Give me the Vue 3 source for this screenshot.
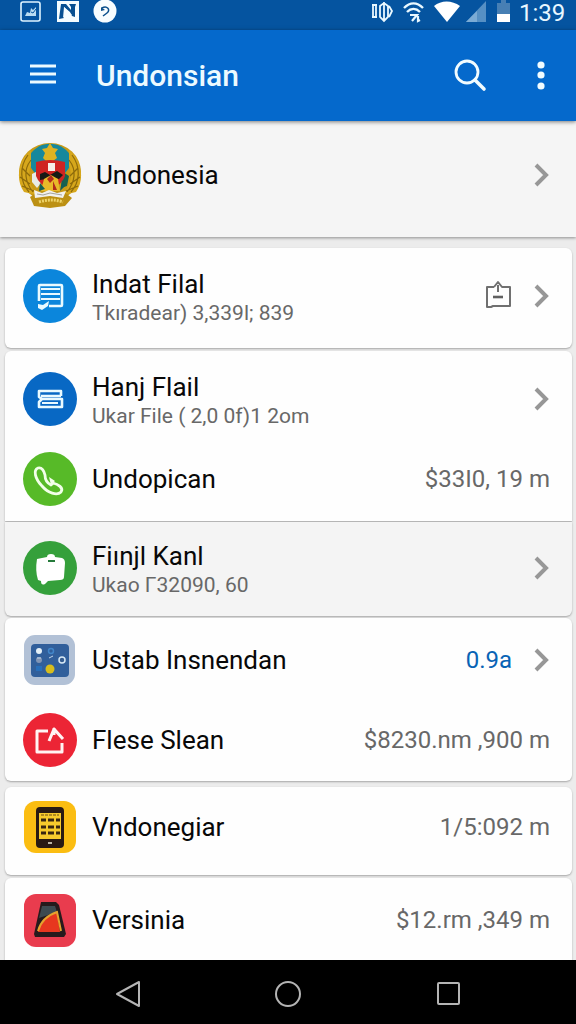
<template>
  <div class="screen">
    <div class="status">
      <svg class="status-left" width="100" height="30" viewBox="0 0 100 30" aria-hidden="true">
        <rect x="1" y="2" width="19" height="19" rx="2" fill="none" stroke="#dff4ff" stroke-width="1.6" />
        <path d="M5 16l2-4 3 1 1-5 2 2 3-3v9z" fill="#b9dcf2" />
        <path d="M6 9h3M11 12l2 1 3-4" stroke="#0554a0" stroke-width="1" fill="none" />
        <rect x="37" y="1" width="22" height="21" fill="#f4fcff" />
        <path d="M41 4h5l5 6V7l-2-3h7l-1 3v10l-3-1-2-4-6-5v11l-5 1z" fill="#064f91" />
        <path d="M44 7l8 8-4 1 1 3-2 1-2-4-2 2z" fill="#f4fcff" />
        <circle cx="85" cy="11" r="11.500" fill="#f8fdff" />
        <path d="M82 8c5-3 9 2 5 5l-4 3" stroke="#0a4f8c" stroke-width="1.500" fill="none" />
        <path d="M81 7v4l4-1z" fill="#0a4f8c" />
      </svg>
      <svg class="status-right" width="144" height="30" viewBox="0 0 144 30" aria-hidden="true">
        <g fill="none" stroke="#e9f8ff" stroke-width="1.800">
          <path d="M1 5h5M1 17h5M2 5v12M5 5v12M9 6l4-3 4 3v11l-4 4-4-4zM13 2v20M18 6l3 5-3 6" />
          <path d="M33 8c6-6 13-6 19 0M36 12c4-4 9-4 13 0" stroke-width="2.400" />
          <path d="M39 15h7l-5 6M47 16v5l2-1" stroke-width="2.200" />
        </g>
        <path d="M63 6c7-6 18-6 26 0L76 22z" fill="#fff" />
        <path d="M95 22L115 1v21z" fill="#5690c4" />
        <path d="M95 22l11-11v11z" fill="#7babd5" />
        <path d="M126 3h4V0h5v3h4v11h-13z" fill="#477fb4" />
        <path d="M126 14h13v8h-13z" fill="#fff" />
      </svg>
      <span class="clock">1:39</span>
    </div>

    <header class="bar">
      <button class="icon-btn" aria-label="Menu">
        <svg width="28" height="28" viewBox="0 0 28 28"><path d="M2 4h26M2 12h26M2 20h26" stroke="#ecfaff" stroke-width="3" /></svg>
      </button>
      <h1>Undonsian</h1>
      <button class="icon-btn" aria-label="Search">
        <svg width="34" height="34" viewBox="0 0 34 34" fill="none" stroke="#f2fcff">
          <circle cx="13" cy="13" r="11" stroke-width="2.800" />
          <path d="M21 21l9 9" stroke-width="3.600" stroke-linecap="round" />
        </svg>
      </button>
      <button class="icon-btn more" aria-label="More options">
        <svg width="12" height="30" viewBox="0 0 12 30" fill="#f2fcff">
          <circle cx="5" cy="4" r="3.600" /><circle cx="5" cy="14" r="3.600" /><circle cx="5" cy="25" r="3.600" />
        </svg>
      </button>
    </header>

    <main>
      <a href="#" class="account">
        <svg class="crest" width="66" height="66" viewBox="0 0 66 66" aria-hidden="true">
          <ellipse cx="33" cy="30" rx="31" ry="29" fill="#c99a16" />
          <path d="M13 13C22-2 44-2 53 13c3 6 0 13-5 18H18c-5-5-8-12-5-18z" fill="#17889c" />
          <path d="M14 8C3 16-3 36 7 50l13 3c-8-10-10-20-6-29z" fill="#d6a71c" />
          <path d="M52 8c11 8 17 28 7 42l-13 3c8-10 10-20 6-29z" fill="#d6a71c" />
          <path d="M11 13C2 25 3 40 12 50M14 18C6 28 8 40 16 50M5 26l8 8M3 35l10 7M5 44l12 5M55 13c9 12 8 27-1 37M52 18c8 10 6 22-2 32M61 26l-8 8M63 35l-10 7M61 44l-12 5" fill="none" stroke="#8d6a0b" stroke-width="1.200" />
          <path d="M15 32l6-3 3 12-4 5-5-6z" fill="#e8ece5" />
          <path d="M46 30l6 4-2 10-6 2z" fill="#17624d" />
          <path d="M33 1l3 5 5 1-3 4 2 5-4 3h-7l-3-3 2-5-3-4 5-1z" fill="#dfb322" />
          <path d="M19 20q14-4 29 0v14q-3 9-14 13-12-4-15-13z" fill="#cf2422" />
          <path d="M31 21h7v8h-7z" fill="#f5eee8" />
          <path d="M23 32l5-2 5 3 7-4 6 4-4 4-5-1-4 6-4-5-6 1z" fill="#161b16" />
          <path d="M27 37l7-4 7 4 2 12H24z" fill="#e8b929" />
          <path d="M34 33l3 4-4 4-3-4zM36 39l4 9h-4z" fill="#b12b1b" />
          <path d="M23 41l5 6-6 2zM45 38l3 6-5 5z" fill="#125e57" />
          <path d="M13 55l8-5 12-1 14 1 8 6-7 8-15 2-16-2z" fill="#bc9013" />
          <path d="M17 48l8 3 7-3 8 3 9-2-3 7-13-2-15 2z" fill="#f2f1ed" />
          <path d="M20 52l6 1 7-2 12 2" stroke="#a4a39d" fill="none" />
          <path d="M22 60q12-4 24 0" stroke="#eed46a" stroke-width="3" stroke-dasharray="2 1" fill="none" />
        </svg>
        <span class="title">Undonesia</span>
        <svg class="chevron" width="16" height="24" viewBox="0 0 16 24"><path d="M2 2l10 10L2 22" /></svg>
      </a>

      <section v-for="(card, c) in cards" :key="c" class="card" :class="card.kind">
        <a v-for="row in card.rows" :key="row.title" href="#" class="row">
          <svg class="icon" width="54" height="54" viewBox="0 0 54 54" aria-hidden="true">
            <g v-if="row.icon === 'note'">
              <circle cx="27" cy="27" r="27" fill="#0b86dc" />
              <path d="M16 32V17q0-1 1-1h21q1 0 1 1v19q0 1-1 1H26" fill="none" stroke="#eafaff" stroke-width="2.600" />
              <path d="M18 20h19M18 25h19M18 30h19" stroke="#eafaff" stroke-width="2.200" />
              <path d="M15 35l5 1 6-4-1 5-6 4-4-2z" fill="#eafaff" />
            </g>
            <g v-else-if="row.icon === 'stack'" fill="none" stroke="#eafaff" stroke-width="2.600">
              <circle cx="27" cy="27" r="27" fill="#0868c4" stroke="none" />
              <path d="M38 24V19H16v6l3 2-3 3v5h23v-8H19M18 24h20" stroke-linejoin="round" />
              <path d="M19 31h16" stroke-width="2" />
            </g>
            <g v-else-if="row.icon === 'phone'">
              <circle cx="27" cy="27" r="27" fill="#57ba28" />
              <path d="M22 23c-1-4-3-8-7-7-5 2-3 11 4 18 6 7 15 10 19 6 3-4-3-8-8-9l-2 2c-4-2-6-6-6-10z" fill="none" stroke="#f2ffe9" stroke-width="2.800" stroke-linejoin="round" />
              <path d="M26 25l6 4-4 4z" fill="#f2ffe9" />
            </g>
            <g v-else-if="row.icon === 'bag'">
              <circle cx="27" cy="27" r="27" fill="#35a03b" />
              <path d="M14 18l10-2q0-3 4-3t4 3l7 1q3 1 3 5l-1 14q0 3-4 3l-12 1-3 3q-4 2-4-3l-3-1q-3-9-1-21z" fill="#fff" />
              <path d="M25 20h7" stroke="#257a3a" stroke-width="2" />
            </g>
            <g v-else-if="row.icon === 'tiles'">
              <rect x="1" y="2" width="51" height="50" rx="11" fill="#b2c1d6" />
              <rect x="8" y="11" width="38" height="33" rx="4" fill="#315f9b" />
              <circle cx="16" cy="18" r="3" fill="#e4f0f8" /><circle cx="28" cy="18" r="2.500" fill="none" stroke="#4286c9" stroke-width="1.500" />
              <circle cx="16" cy="27" r="3" fill="#8195b5" /><circle cx="39" cy="27" r="3" fill="#345c91" stroke="#d8e9f5" stroke-width="1.500" />
              <path d="M14 25h4M26 25l4-2" stroke="#c4d5e8" /><circle cx="27" cy="36" r="4.500" fill="#d7bd1d" />
              <rect x="13" y="33" width="6" height="5" fill="#286fba" />
            </g>
            <g v-else-if="row.icon === 'share'">
              <circle cx="27" cy="27" r="27" fill="#ec2535" />
              <path d="M25 18H14v21h25v-9M26 28l5-12 9 10M31 15v7" fill="none" stroke="#fff4f3" stroke-width="3" stroke-linejoin="round" />
            </g>
            <g v-else-if="row.icon === 'mobile'">
              <rect x="1" y="1" width="52" height="52" rx="12" fill="#fbbd12" />
              <rect x="13" y="7" width="28" height="41" rx="4" fill="#291a13" />
              <path d="M16 13h22v26H16z" fill="#f7ca2d" />
              <path d="M18 20h5m2 0h6m2 0h4M18 27h5m2 0h6m2 0h4M18 33h5m2 0h6m2 0h4" stroke="#392611" stroke-width="3" />
              <path d="M18 15h18" stroke="#6d4c12" stroke-width="1" stroke-dasharray="3 1" />
              <path d="M25 43h4" stroke="#bcb5a6" stroke-width="2" />
            </g>
            <g v-else>
              <rect x="1" y="1" width="52" height="53" rx="12" fill="#e93c4e" />
              <path d="M18 9h15l3 3 7 29-2 3H12l-1-3z" fill="#271a1c" />
              <path d="M19 13h13l2 6-18 6z" fill="#3d4a50" />
              <path d="M15 39q4-14 19-20l3 20z" fill="#e7371f" />
              <path d="M15 38q4-14 19-19l4 19" fill="none" stroke="#e6a22e" stroke-width="2" />
            </g>
          </svg>
          <span class="text" :class="{ double: row.sub }">
            <span class="title">{{ row.title }}</span>
            <span v-if="row.sub" class="sub">{{ row.sub }}</span>
          </span>
          <svg v-if="row.badge" class="badge" width="28" height="32" viewBox="0 0 28 32" aria-hidden="true">
            <path d="M10 7H3v20h4l2-1h17V7h-8l-4-5-4 5M14 5v7" fill="none" stroke="#707070" stroke-width="2" stroke-linejoin="round" />
            <path d="M9 17h10" stroke="#606060" stroke-width="2.600" />
          </svg>
          <span v-if="row.value" class="value" :class="{ blue: row.arrow }">{{ row.value }}</span>
          <svg v-if="row.arrow" class="chevron" width="16" height="24" viewBox="0 0 16 24"><path d="M2 2l10 10L2 22" /></svg>
        </a>
      </section>
    </main>

    <nav class="nav">
      <button aria-label="Back">
        <svg width="28" height="30" viewBox="0 0 28 30"><path d="M25 4v24L3 16z" /></svg>
      </button>
      <button aria-label="Home">
        <svg width="28" height="30" viewBox="0 0 28 30"><circle cx="14" cy="16" r="12" /></svg>
      </button>
      <button aria-label="Recent apps">
        <svg width="28" height="30" viewBox="0 0 28 30"><rect x="4" y="5" width="21" height="21" rx="1" /></svg>
      </button>
    </nav>
  </div>
</template>

<script setup>
const cards = [
  {
    kind: "single",
    rows: [{ icon: "note", title: "Indat Filal", sub: "Tkıradear) 3,339l; 839", badge: true, arrow: true }],
  },
  {
    kind: "top",
    rows: [
      { icon: "stack", title: "Hanj Flail", sub: "Ukar File ( 2,0 0f)1 2om", arrow: true },
      { icon: "phone", title: "Undopican", value: "$33I0, 19 m" },
    ],
  },
  {
    kind: "shaded",
    rows: [{ icon: "bag", title: "Fiınjl Kanl", sub: "Ukao Γ32090, 60", arrow: true }],
  },
  {
    kind: "pair",
    rows: [
      { icon: "tiles", title: "Ustab Insnendan", value: "0.9a", arrow: true },
      { icon: "share", title: "Flese Slean", value: "$8230.nm ,900 m" },
    ],
  },
  { kind: "short", rows: [{ icon: "mobile", title: "Vndonegiar", value: "1/5:092 m" }] },
  { kind: "last", rows: [{ icon: "prism", title: "Versinia", value: "$12.rm ,349 m" }] },
];
</script>

<style>
body {
  margin: 0;
  background: #ececec;
}
</style>

<style scoped>
.screen {
  min-height: 100vh;
  display: flex;
  flex-direction: column;
  font-family: Roboto, "Liberation Sans", sans-serif;
  color: #080808;
}
svg {
  display: block;
  flex: none;
}
a {
  color: inherit;
  text-decoration: none;
}
button {
  border: 0;
  padding: 0;
  background: none;
  cursor: pointer;
}
.status {
  height: 30px;
  display: flex;
  padding: 0 11px 0 20px;
  background: #0554a0;
}
.status-right {
  margin-left: auto;
}
.clock {
  width: 46px;
  margin-left: 4px;
  font-size: 24px;
  line-height: 26px;
  color: #e9f7ff;
  white-space: nowrap;
}
.bar {
  position: relative;
  height: 91px;
  box-sizing: border-box;
  display: flex;
  align-items: center;
  padding: 0 28px;
  background: #0569cc;
  box-shadow: 0 1px 4px rgba(0, 0, 0, 0.5);
}
.bar h1 {
  flex: 1;
  margin: 0 0 0 40px;
  font-size: 30px;
  line-height: 36px;
  font-weight: 500;
  color: #ecfaff;
}
.more {
  margin-left: 48px;
}
.account {
  height: 116px;
  box-sizing: border-box;
  display: flex;
  align-items: center;
  padding: 0 26px 8px 17px;
  margin-bottom: 11px;
  background: #f5f5f5;
  box-shadow: 0 1px 3px rgba(0, 0, 0, 0.4);
}
.account .title {
  flex: 1;
  margin-left: 13px;
}
.chevron {
  fill: none;
  stroke: #979797;
  stroke-width: 4;
}
main {
  flex: 1;
}
.card {
  margin: 0 4px 2px 5px;
  border-radius: 6px;
  background: #fefefe;
  box-shadow: 0 1px 2px rgba(0, 0, 0, 0.3);
}
.row {
  min-height: 80px;
  display: flex;
  align-items: center;
  padding: 0 22px 0 18px;
}
.single {
  padding: 8px 0 12px;
  margin-bottom: 3px;
}
.top {
  padding: 8px 0 2px;
  margin-bottom: 1px;
  border-radius: 6px 6px 0 0;
}
.shaded {
  padding: 6px 0 8px;
  border-radius: 0 0 6px 6px;
  background: #f4f4f4;
}
.pair {
  padding: 2px 0 1px;
  margin-bottom: 6px;
}
.short {
  padding-bottom: 8px;
  margin-bottom: 3px;
}
.last {
  padding-top: 2px;
  margin-bottom: 0;
  border-radius: 6px 6px 0 0;
}
.text {
  flex: 1;
  display: flex;
  flex-direction: column;
  margin-left: 15px;
  white-space: nowrap;
}
.double {
  padding-top: 4px;
}
.title {
  font-size: 26px;
  line-height: 30px;
}
.sub {
  font-size: 21px;
  line-height: 28px;
  color: #686868;
}
.value {
  font-size: 24px;
  line-height: 30px;
  color: #686868;
  white-space: nowrap;
}
.blue {
  color: #0863b5;
}
.value + .chevron,
.badge + .chevron {
  margin-left: 22px;
}
.nav {
  height: 64px;
  display: flex;
  justify-content: center;
  align-items: center;
  gap: 132px;
  padding-top: 2px;
  box-sizing: border-box;
  background: #000;
}
.nav svg {
  fill: none;
  stroke: #b4b4b4;
  stroke-width: 2;
  stroke-linejoin: round;
}
</style>
